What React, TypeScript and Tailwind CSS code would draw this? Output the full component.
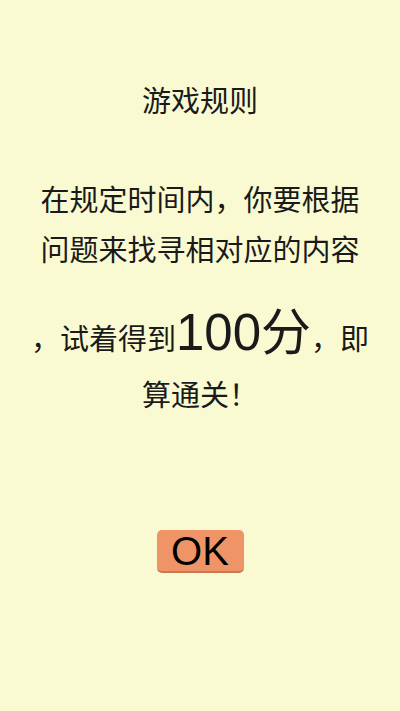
export default function App() {
  const cjk = { fontFamily: '"Noto Sans CJK SC", "Noto Sans", sans-serif' };
  const num = { fontFamily: '"Liberation Sans", "Noto Sans CJK SC", sans-serif' };

  return (
    <div
      className="min-h-screen w-full bg-[#fafad2] text-[#1a1a1a] flex flex-col items-center pt-[74px]"
      style={cjk}
    >
      <h1 className="text-[29px] leading-[50px] h-[50px] font-normal">游戏规则</h1>

      <div className="mt-[49px] text-[29px] leading-[50px] text-center">
        <div>在规定时间内，你要根据</div>
        <div>问题来找寻相对应的内容</div>
      </div>

      <div className="mt-[30px] text-[29px] leading-[50px] text-center whitespace-nowrap">
        ，试着得到
        <span className="text-[51px] leading-none" style={num}>
          100
        </span>
        <span className="text-[50px] leading-none">分</span>
        ，即
      </div>

      <div className="mt-[6px] text-[29px] leading-[50px] text-center">算通关！</div>

      <button
        className="mt-[112px] w-[87px] h-[43px] rounded-[5px] bg-[#ef9466] border-b-2 border-[#c97950] flex items-center justify-center text-[40px] leading-none text-black"
        style={num}
      >
        OK
      </button>
    </div>
  );
}
